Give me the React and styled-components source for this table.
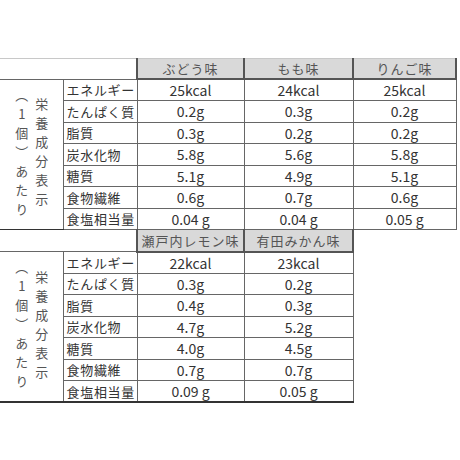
import React from 'react'
import styled, { createGlobalStyle } from 'styled-components'

const GlobalStyle = createGlobalStyle`
  html, body {
    margin: 0;
    padding: 0;
    background: #fff;
  }
  body {
    font-family: "Noto Sans CJK JP", "Noto Sans", sans-serif;
    color: #333;
  }
`

const groups = [
  {
    flavors: ['ぶどう味', 'もも味', 'りんご味'],
    rows: [
      ['エネルギー', '25kcal', '24kcal', '25kcal'],
      ['たんぱく質', '0.2g', '0.3g', '0.2g'],
      ['脂質', '0.3g', '0.2g', '0.2g'],
      ['炭水化物', '5.8g', '5.6g', '5.8g'],
      ['糖質', '5.1g', '4.9g', '5.1g'],
      ['食物繊維', '0.6g', '0.7g', '0.6g'],
      ['食塩相当量', '0.04 g', '0.04 g', '0.05 g'],
    ],
  },
  {
    flavors: ['瀬戸内レモン味', '有田みかん味'],
    rows: [
      ['エネルギー', '22kcal', '23kcal'],
      ['たんぱく質', '0.3g', '0.2g'],
      ['脂質', '0.4g', '0.3g'],
      ['炭水化物', '4.7g', '5.2g'],
      ['糖質', '4.0g', '4.5g'],
      ['食物繊維', '0.7g', '0.7g'],
      ['食塩相当量', '0.09 g', '0.05 g'],
    ],
  },
]

export default function App() {
  return (
    <>
      <GlobalStyle />
      <Page>
        <Table>
          <colgroup>
            <col style={{ width: 63 }} />
            <col style={{ width: 74 }} />
            <col style={{ width: 107 }} />
            <col style={{ width: 109 }} />
            <col style={{ width: 103 }} />
          </colgroup>
          {groups.map((g, gi) => (
            <tbody key={gi}>
              <HeadRow $first={gi === 0}>
                <Blank colSpan={2} $first={gi === 0} />
                {g.flavors.map((f) => (
                  <Flavor key={f} $first={gi === 0}>{f}</Flavor>
                ))}
                {g.flavors.length < 3 && <Empty />}
              </HeadRow>
              {g.rows.map((r, ri) => (
                <Row key={r[0]} $last={gi === groups.length - 1 && ri === g.rows.length - 1}>
                  {ri === 0 && (
                    <Side rowSpan={g.rows.length} $last={gi === groups.length - 1}>
                      <SideText>
                        <Vertical>（1個）あたり</Vertical>
                        <Vertical>栄養成分表示</Vertical>
                      </SideText>
                    </Side>
                  )}
                  <Item>{r[0]}</Item>
                  {r.slice(1).map((v, vi) => (
                    <Value key={vi}>{v}</Value>
                  ))}
                  {r.length < 4 && <Empty />}
                </Row>
              ))}
            </tbody>
          ))}
        </Table>
      </Page>
    </>
  )
}

const Page = styled.div`
  width: 460px;
  height: 460px;
  padding-top: 58px;
  box-sizing: border-box;
`

const Table = styled.table`
  border-collapse: collapse;
  table-layout: fixed;
  width: 456px;
  td, th {
    padding: 0;
    border: 1px solid #666;
    font-weight: normal;
  }
`

const HeadRow = styled.tr`
  height: ${(p) => (p.$first ? '20px' : '22px')};
`

const Row = styled.tr`
  height: 21.5px;
  td {
    border-bottom: ${(p) => (p.$last ? '2px solid #333' : '1px solid #666')};
  }
`

const Blank = styled.th`
  background: #fff;
  && {
    border-left: none;
    border-top: 1px solid ${(p) => (p.$first ? '#c8c8c8' : '#666')};
  }
`

const Flavor = styled.th`
  background: #d9d9d9;
  color: #555;
  font-size: 13px;
  letter-spacing: 1px;
  text-align: center;
  && {
    border-top: 1px solid ${(p) => (p.$first ? '#c8c8c8' : '#555')};
    border-left: 2px solid #555;
    border-right: 2px solid #555;
    border-bottom: 2px solid #555;
  }
`

const Empty = styled.td`
  && {
    border: none;
  }
`

const Side = styled.td`
  vertical-align: middle;
  && {
    border-left: none;
    border-bottom: ${(p) => (p.$last ? '2px solid #333' : '1px solid #333')};
  }
`

const SideText = styled.div`
  display: flex;
  justify-content: center;
  align-items: center;
  gap: 6px;
  padding-top: 2px;
`

const Vertical = styled.span`
  writing-mode: vertical-rl;
  text-orientation: upright;
  font-size: 13px;
  letter-spacing: 6px;
  color: #555;
  line-height: 14px;
`

const Item = styled.td`
  font-size: 13px;
  letter-spacing: 0.7px;
  color: #333;
  padding-left: 3px !important;
  white-space: nowrap;
  overflow: hidden;
`

const Value = styled.td`
  font-size: 14px;
  text-align: center;
  color: #333;
`
